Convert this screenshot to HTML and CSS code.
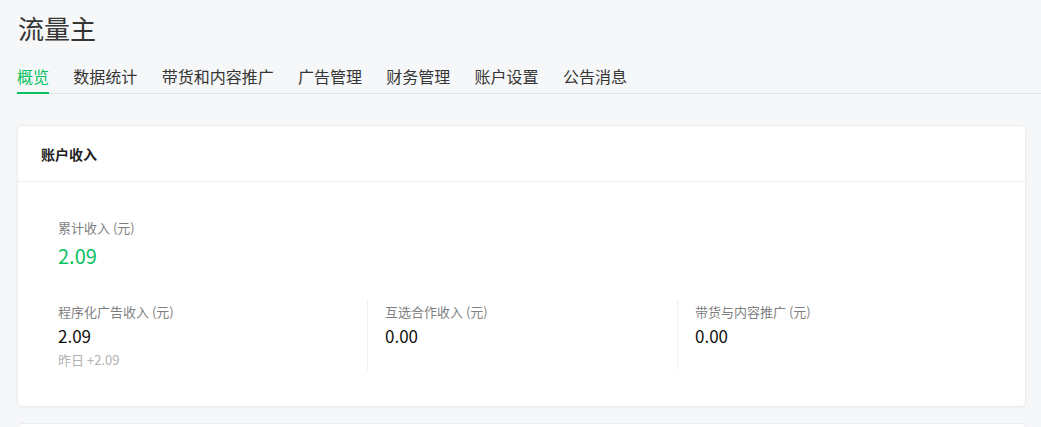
FILE: index.html
```html
<!DOCTYPE html>
<html lang="zh-CN">
<head>
<meta charset="utf-8">
<title>流量主</title>
<link rel="stylesheet" href="styles.css">
</head>
<body>
<div class="page">
  <h1 class="title">流量主</h1>
  <nav class="tabs">
    <a class="tab active">概览</a>
    <a class="tab">数据统计</a>
    <a class="tab">带货和内容推广</a>
    <a class="tab">广告管理</a>
    <a class="tab">财务管理</a>
    <a class="tab">账户设置</a>
    <a class="tab">公告消息</a>
  </nav>
  <main class="content">
    <section class="card">
      <header class="card-head">账户收入</header>
      <div class="card-body">
        <div class="total-label">累计收入 (元)</div>
        <div class="total-value">2.09</div>
        <div class="cols">
          <div class="col">
            <div class="col-label">程序化广告收入 (元)</div>
            <div class="col-value">2.09</div>
            <div class="col-sub">昨日 +2.09</div>
          </div>
          <div class="col">
            <div class="col-label">互选合作收入 (元)</div>
            <div class="col-value">0.00</div>
          </div>
          <div class="col">
            <div class="col-label">带货与内容推广 (元)</div>
            <div class="col-value">0.00</div>
          </div>
        </div>
      </div>
    </section>
    <section class="card card-next"></section>
  </main>
</div>
</body>
</html>
```

FILE: styles.css
```css
* { box-sizing: border-box; }
html, body {
  margin: 0;
  padding: 0;
  background: #f6f7f8;
  height: 100%;
  overflow: hidden;
}
body {
  font-family: "Noto Sans CJK SC", "Noto Sans", sans-serif;
  color: #333;
}
.page {
  padding: 10px 0 0 17px;
}
.title {
  margin: 0 0 18px 1px;
  font-size: 26px;
  line-height: 36px;
  font-weight: 400;
  color: #353535;
}
.tabs {
  display: flex;
  gap: 24.3px;
  border-bottom: 1px solid #e2e3e5;
}
.tab {
  font-size: 16px;
  line-height: 24px;
  padding-bottom: 4px;
  border-bottom: 2px solid transparent;
  margin-bottom: -1px;
  color: #353535;
  cursor: pointer;
}
.tab.active {
  color: #07c160;
  border-bottom-color: #07c160;
}
.content {
  padding: 31px 15px 0 0;
  display: flex;
  flex-direction: column;
  gap: 16px;
}
.card {
  background: #fff;
  border: 1px solid #ebecee;
  border-radius: 5px;
  box-shadow: 0 1px 3px rgba(0,0,0,0.04);
}
.card-head {
  height: 56px;
  padding-left: 23px;
  display: flex;
  align-items: center;
  font-size: 14px;
  font-weight: 700;
  color: #222;
  border-bottom: 1px solid #eeeff1;
}
.card-body {
  padding: 36px 40px 36px 40px;
}
.total-label {
  font-size: 13px;
  line-height: 20px;
  color: #7f7f7f;
}
.total-value {
  margin-top: 4px;
  font-size: 20px;
  line-height: 28px;
  color: #07c160;
}
.cols {
  margin-top: 30px;
  display: grid;
  grid-template-columns: 309px 310px 310px;
}
.col {
  min-height: 70px;
  padding-top: 2px;
}
.col + .col {
  border-left: 1px solid #eeeff1;
  padding-left: 17px;
}
.col-label {
  font-size: 13px;
  line-height: 20px;
  color: #7f7f7f;
}
.col-value {
  margin-top: 2px;
  font-size: 17px;
  line-height: 24px;
  color: #111;
}
.col-sub {
  margin-top: 3px;
  font-size: 13px;
  line-height: 18px;
  color: #b2b2b2;
}
.card-next {
  height: 60px;
}
```
